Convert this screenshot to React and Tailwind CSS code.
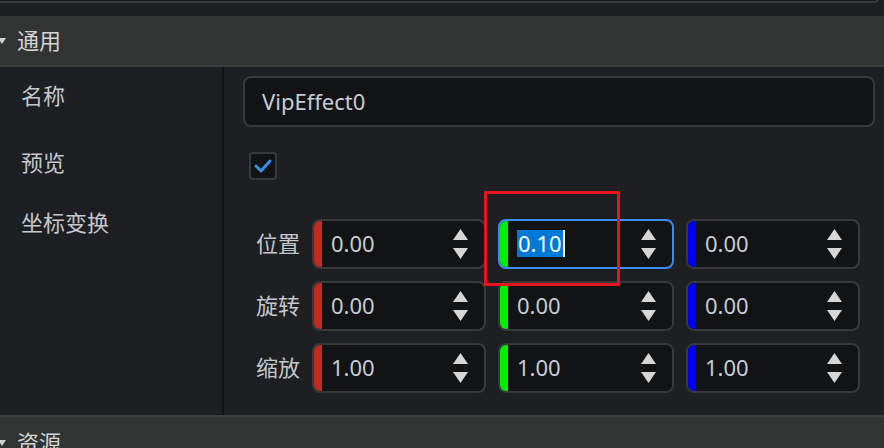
import React from "react";

const FONT = { fontFamily: '"Noto Sans", "Noto Sans CJK SC", sans-serif' };

function Spinner() {
  return (
    <svg width="17" height="32" viewBox="0 0 17 32" className="shrink-0">
      <polygon points="8.5,1 16,12 1,12" fill="#d6d6d6" />
      <polygon points="1,20 16,20 8.5,31" fill="#d6d6d6" />
    </svg>
  );
}

function NumField({ color, value, focused, width }) {
  return (
    <div
      className={`h-[50px] ${width} rounded-[8px] border-2 ${
        focused ? "border-[#3b8cf0]" : "border-[#38393b]"
      } bg-[#121315] flex items-center overflow-hidden`}
    >
      <div className={`w-[8px] h-full shrink-0 ${color}`} />
      <div className="flex-1 pl-[9px] flex items-center -mt-[2px]">
        {focused ? (
          <span className="flex items-center">
            <span className="bg-[#0078d7] text-white text-[22px] leading-[27px] px-[1px]">{value}</span>
            <span className="w-[2px] h-[27px] bg-white" />
          </span>
        ) : (
          <span className="text-[22px] text-[#c6cdd4] leading-none">{value}</span>
        )}
      </div>
      <div className="pr-[15px] flex items-center">
        <Spinner />
      </div>
    </div>
  );
}

function VecRow({ label, vals, focusIdx }) {
  const colors = ["bg-[#c42b1c]", "bg-[#00f000]", "bg-[#0000f5]"];
  const widths = ["w-[174px]", "w-[176px]", "w-[174px]"];
  return (
    <div className="flex items-center h-[50px]">
      <div className="w-[56px] text-[22px] text-[#c4c8cc] -mt-[2px]">{label}</div>
      <div className="flex gap-[12px]">
        {vals.map((v, i) => (
          <NumField key={i} color={colors[i]} value={v} width={widths[i]} focused={focusIdx === i} />
        ))}
      </div>
    </div>
  );
}

function Tri() {
  return (
    <svg width="8" height="8" viewBox="0 0 8 8" className="shrink-0 -ml-[2px]">
      <polygon points="0,1 8,1 4,7" fill="#d0d0d0" />
    </svg>
  );
}

export default function App() {
  return (
    <div className="w-[884px] h-[448px] overflow-hidden bg-[#1e1f22] flex flex-col relative" style={FONT}>
      <div className="h-[16px] shrink-0 bg-[#1e1f22]">
        <div className="h-[3px] mr-[6px] bg-[#18191b] border-b-2 border-r-2 border-[#3a3b3d] rounded-br-[6px]" />
      </div>
      <div className="h-[51px] shrink-0 bg-[#323433] border-b-2 border-[#3c3e3d] flex items-center gap-[11px]">
        <Tri />
        <span className="text-[22px] text-[#d2d4d6]">通用</span>
      </div>
      <div className="flex h-[348px] shrink-0">
        <div className="w-[224px] shrink-0 border-r-2 border-[#121314] relative text-[22px] text-[#c4c8cc]">
          <div className="absolute left-[21px] top-[12px]">名称</div>
          <div className="absolute left-[21px] top-[79px]">预览</div>
          <div className="absolute left-[21px] top-[139px]">坐标变换</div>
        </div>
        <div className="flex-1 flex flex-col pl-[19px] pr-[9px] pt-[9px]">
          <div className="h-[51px] rounded-[8px] border-2 border-[#38393b] bg-[#121315] flex items-center pl-[17px]">
            <span className="text-[22px] text-[#c6cdd4]">VipEffect0</span>
          </div>
          <div className="mt-[25px] ml-[6px] w-[28px] h-[28px] rounded-[4px] border-2 border-[#38393b] bg-[#121315] flex items-center justify-center">
            <svg width="18" height="14" viewBox="0 0 18 14">
              <polyline points="2,7 7,12 16,2" fill="none" stroke="#3b8eea" strokeWidth="3" strokeLinecap="round" strokeLinejoin="round" />
            </svg>
          </div>
          <div className="mt-[39px] ml-[13px] flex flex-col gap-[12px]">
            <VecRow label="位置" vals={["0.00", "0.10", "0.00"]} focusIdx={1} />
            <VecRow label="旋转" vals={["0.00", "0.00", "0.00"]} />
            <VecRow label="缩放" vals={["1.00", "1.00", "1.00"]} />
          </div>
        </div>
      </div>
      <div className="flex-1 bg-[#323433] border-t-2 border-[#3c3e3d] flex items-start pt-[10px] gap-[11px]">
        <div className="mt-[12px]"><Tri /></div>
        <span className="text-[22px] text-[#d2d4d6] leading-[30px]">资源</span>
      </div>
      <div className="absolute left-[484px] top-[191px] w-[136px] h-[95px] border-[3px] border-[#e5141e]" />
    </div>
  );
}
